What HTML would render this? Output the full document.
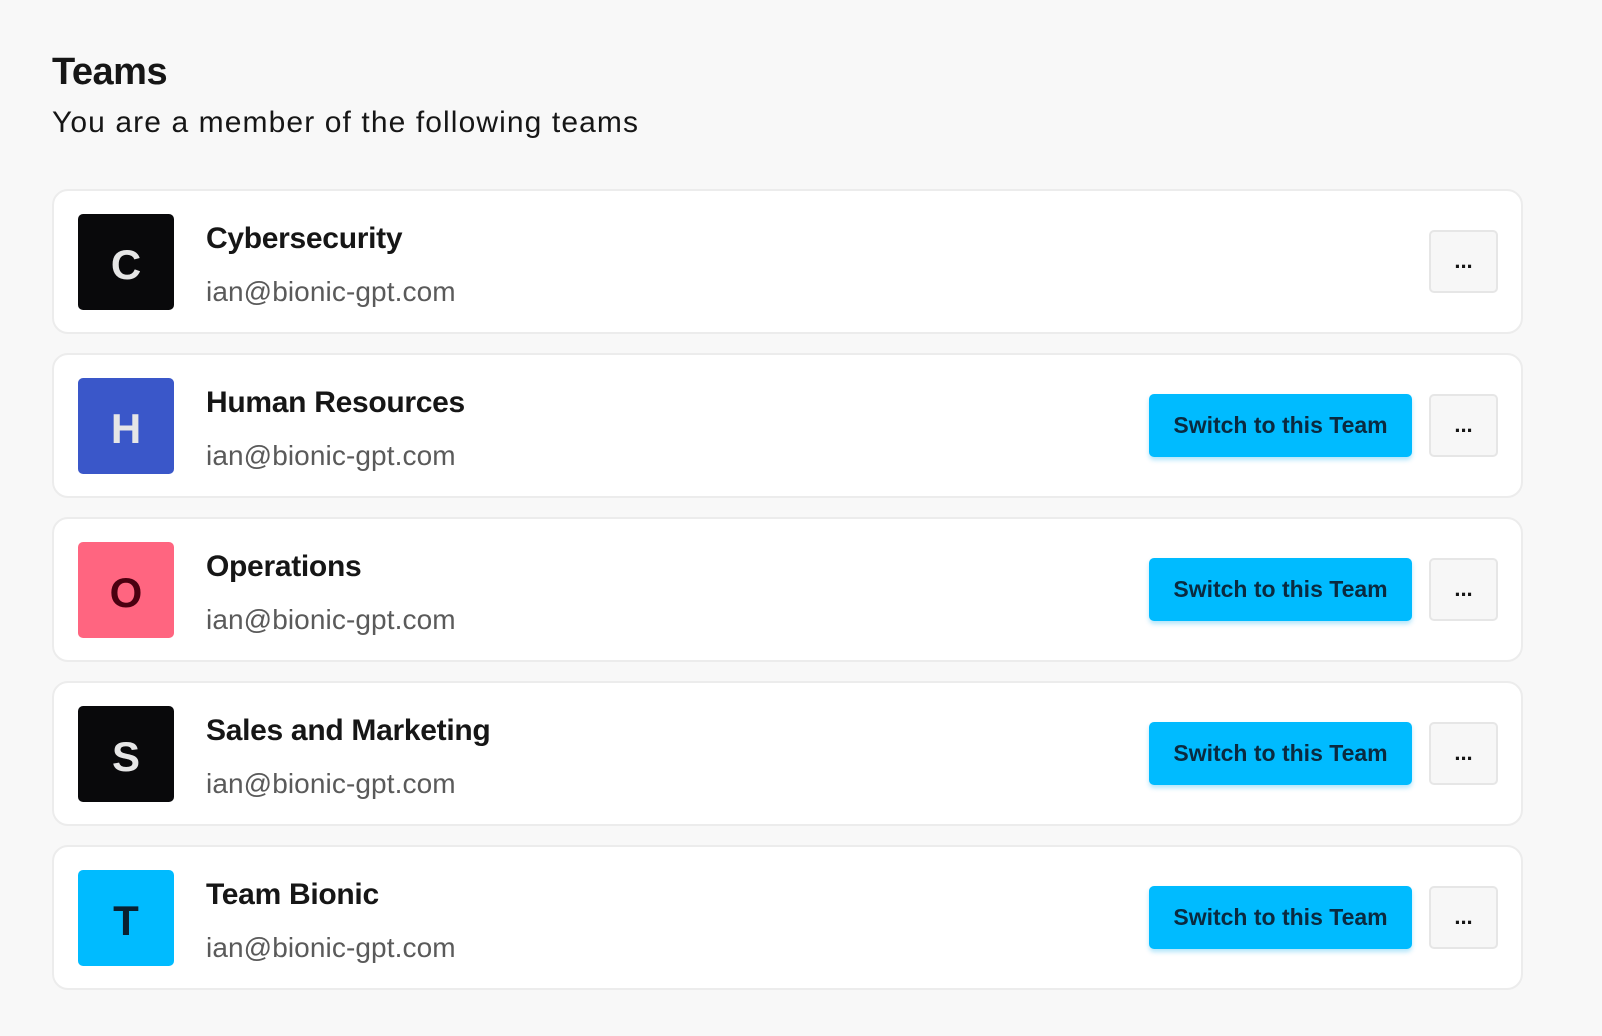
<!DOCTYPE html>
<html><head><style>
*{box-sizing:border-box;margin:0;padding:0}
body{width:1602px;height:1036px;background:#f8f8f8;font-family:"Liberation Sans",sans-serif;color:#161616;position:relative;overflow:hidden}
h1{position:absolute;left:52px;top:51px;font-size:38px;font-weight:bold;letter-spacing:-0.5px}
.sub{position:absolute;left:52px;top:106px;font-size:30px;letter-spacing:1.1px}
.card{position:absolute;left:52px;width:1471px;height:145px;background:#fff;border:2px solid #ececec;border-radius:16px}
.av{position:absolute;left:24px;top:23px;width:96px;height:96px;border-radius:5px;display:flex;align-items:center;justify-content:center;font-size:42px;font-weight:bold;color:#e6e6e6;padding-top:6px}
.nm{position:absolute;left:152px;top:31px;font-size:30px;font-weight:bold;letter-spacing:-0.3px}
.em{position:absolute;left:152px;top:85px;font-size:28px;color:#5a5a5a;letter-spacing:0.1px}
.sw{position:absolute;left:1095px;top:39px;width:263px;height:63px;background:#00bbff;border-radius:5px;box-shadow:0 3px 5px rgba(0,170,240,.3);font-size:23px;font-weight:bold;color:#0a2a40;display:flex;align-items:center;justify-content:center}
.dt{position:absolute;left:1375px;top:39px;width:69px;height:63px;background:#f7f7f7;border:2px solid #e6e6e6;border-radius:5px;font-size:22px;font-weight:bold;display:flex;align-items:center;justify-content:center;padding-bottom:2px}
</style></head><body>
<h1>Teams</h1>
<div class="sub">You are a member of the following teams</div>

<div class="card" style="top:189px"><div class="av" style="background:#09090b">C</div><div class="nm">Cybersecurity</div><div class="em">ian@bionic-gpt.com</div><div class="dt">...</div></div>
<div class="card" style="top:353px"><div class="av" style="background:#3a57c9">H</div><div class="nm">Human Resources</div><div class="em">ian@bionic-gpt.com</div><div class="sw">Switch to this Team</div><div class="dt">...</div></div>
<div class="card" style="top:517px"><div class="av" style="background:#ff6580;color:#4a0010">O</div><div class="nm">Operations</div><div class="em">ian@bionic-gpt.com</div><div class="sw">Switch to this Team</div><div class="dt">...</div></div>
<div class="card" style="top:681px"><div class="av" style="background:#09090b">S</div><div class="nm">Sales and Marketing</div><div class="em">ian@bionic-gpt.com</div><div class="sw">Switch to this Team</div><div class="dt">...</div></div>
<div class="card" style="top:845px"><div class="av" style="background:#00bbff;color:#0a2030">T</div><div class="nm">Team Bionic</div><div class="em">ian@bionic-gpt.com</div><div class="sw">Switch to this Team</div><div class="dt">...</div></div>
</body></html>
